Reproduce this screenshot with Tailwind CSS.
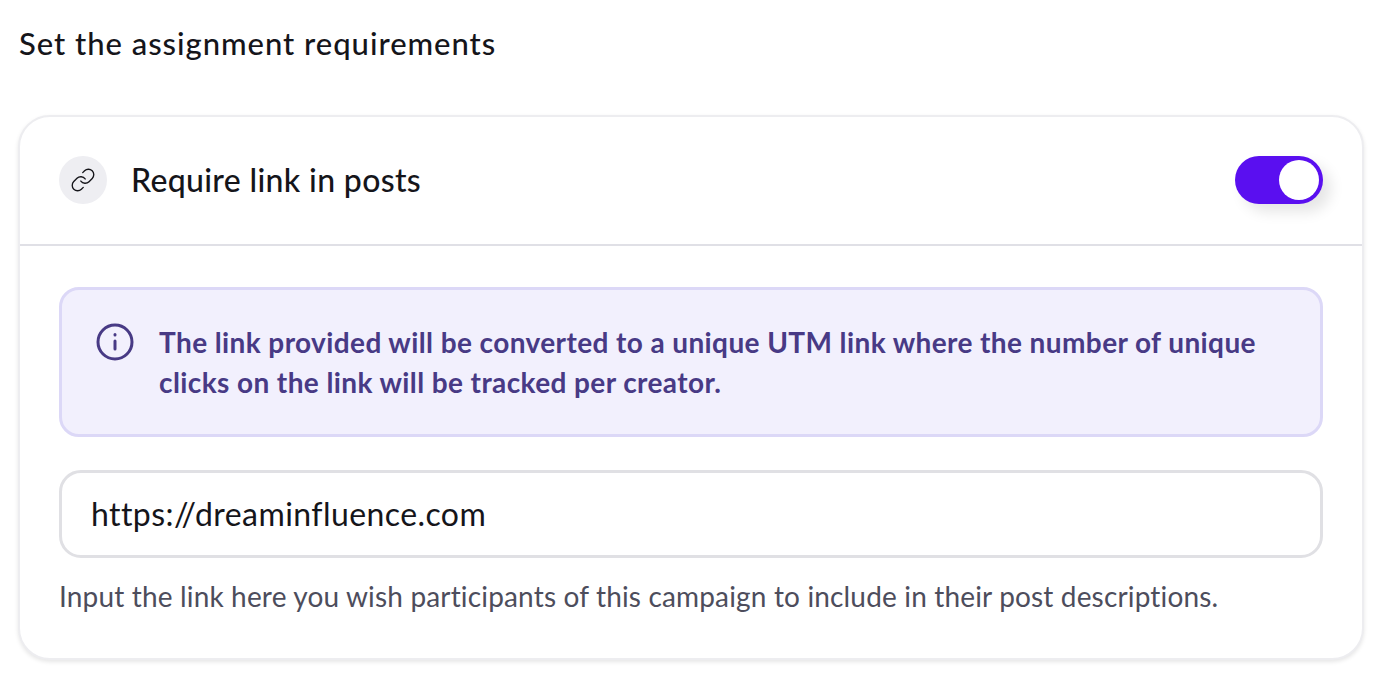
<!DOCTYPE html>
<html lang="en">
<head>
  <meta charset="UTF-8" />
  <meta name="viewport" content="width=device-width, initial-scale=1" />
  <title>Assignment requirements</title>
  <script src="https://cdn.jsdelivr.net/npm/@tailwindcss/browser@4"></script>
</head>
<body class="bg-white h-[690px] overflow-hidden font-['Lato',sans-serif] text-[#15151a]">
  <div class="pl-[18px] pr-[26px]">
    <h1 class="pl-px pt-[25px] h-[115px] text-[31px] leading-9 font-medium tracking-[0.97px]">Set the assignment requirements</h1>

    <div class="h-[545px] bg-white border-2 border-[#ededf0] rounded-[32px] shadow-[0_2px_4px_rgba(0,0,0,0.1)]">
      <div class="h-[129px] pb-px flex items-center justify-between px-[39px] border-b-2 border-[#e0e0e6]">
        <div class="flex items-center gap-6">
          <span class="w-12 h-12 rounded-full bg-[#eeeef2] flex items-center justify-center">
            <svg class="w-[26px] h-[26px]" viewBox="0 0 24 24" fill="none" stroke="#15151a" stroke-width="1.25" stroke-linecap="round" stroke-linejoin="round">
              <path d="M10 13a5 5 0 0 0 7.54.54l3-3a5 5 0 0 0-7.07-7.07l-1.72 1.71" />
              <path d="M14 11a5 5 0 0 0-7.54-.54l-3 3a5 5 0 0 0 7.07 7.07l1.71-1.71" />
            </svg>
          </span>
          <span class="text-[32px] leading-10 font-medium tracking-[0.33px]">Require link in posts</span>
        </div>
        <div class="w-[88px] h-12 rounded-full bg-[#5a0ff0] flex items-center justify-end pr-1 shadow-[8px_8px_14px_rgba(0,0,0,0.1)]">
          <span class="w-10 h-10 rounded-full bg-white"></span>
        </div>
      </div>

      <div class="px-[39px] pt-[41px]">
        <div class="h-[150px] flex gap-6 bg-[#f2f0fd] border-[3px] border-[#dcd8f7] rounded-[20px] pl-[33px] pr-8 pt-[32px] text-[#483a85]">
          <svg class="w-10 h-10 shrink-0" viewBox="0 0 40 40" fill="none" stroke="currentColor" stroke-width="3" stroke-linecap="round">
            <circle cx="20" cy="20" r="17" />
            <path d="M20 19v8" />
            <path d="M20 12.5v.5" />
          </svg>
          <p class="text-[28px] leading-10 font-bold tracking-[0.4px]">The link provided will be converted to a unique UTM link where the number of unique clicks on the link will be tracked per creator.</p>
        </div>

        <div class="mt-[33px] h-[88px] flex items-center px-[29px] bg-white border-[3px] border-[#e0e0e4] rounded-[22px] text-[32px] tracking-[0.42px]">https://dreaminfluence.com</div>

        <p class="mt-[18px] text-[28px] leading-10 tracking-[0.16px] text-[#4d4d5c]">Input the link here you wish participants of this campaign to include in their post descriptions.</p>
      </div>
    </div>
  </div>
</body>
</html>
